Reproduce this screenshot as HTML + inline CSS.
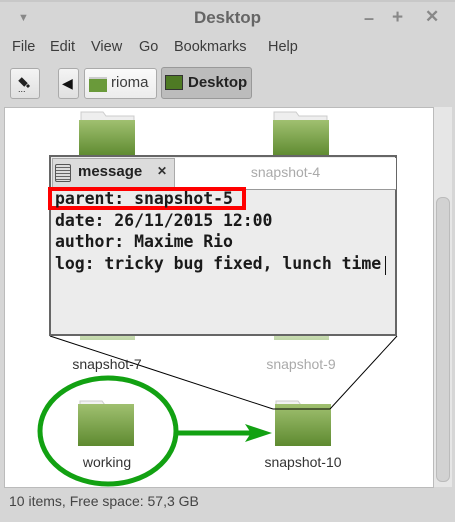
<!DOCTYPE html><html><head><style>
body{margin:0;width:455px;height:522px;background:#d6d6d6;font-family:"Liberation Sans",sans-serif;position:relative;overflow:hidden}
.a{position:absolute}
.t{color:#3c3c3c;font-size:14.5px}
.btn{position:absolute;border:1px solid #aaa;border-radius:3px;background:linear-gradient(#f4f4f4,#e0e0e0);box-sizing:border-box}
.lbl{position:absolute;font-size:14px;color:#333;text-align:center;width:120px}
.mono{font-family:"DejaVu Sans Mono","Liberation Mono",monospace;font-size:16.5px;font-weight:bold;color:#1a1a1a;line-height:21.5px;position:absolute;left:55px;top:188px;white-space:pre;letter-spacing:-0.05px}
</style></head><body>
<div class="a" style="left:0;top:0;width:455px;height:2px;background:#c8c8c8"></div>
<div class="a" style="left:18px;top:12px;color:#888;font-size:11px">▼</div>
<div class="a" style="left:0;width:455px;top:8px;text-align:center;font-size:17px;font-weight:bold;color:#666">Desktop</div>
<div class="a" style="left:364px;top:8px;color:#888;font-size:18px;font-weight:bold">–</div>
<div class="a" style="left:392px;top:7px;color:#888;font-size:19px;font-weight:bold">+</div>
<div class="a" style="left:425px;top:7px;color:#888;font-size:17px;font-weight:bold">✕</div>
<div class="a t" style="left:12px;top:39px">File</div>
<div class="a t" style="left:50px;top:39px">Edit</div>
<div class="a t" style="left:91px;top:39px">View</div>
<div class="a t" style="left:139px;top:39px">Go</div>
<div class="a t" style="left:174px;top:39px">Bookmarks</div>
<div class="a t" style="left:268px;top:39px">Help</div>
<div class="btn" style="left:10px;top:68px;width:30px;height:31px"></div>
<svg class="a" style="left:17px;top:74px" width="18" height="20"><path d="M3 5 L9 11" stroke="#222" stroke-width="5"/><path d="M10 11 L12 13" stroke="#222" stroke-width="3"/><text x="1" y="18" font-size="9" fill="#222">...</text></svg>
<div class="btn" style="left:58px;top:68px;width:21px;height:31px"></div>
<div class="a" style="left:62px;top:75px;font-size:14px;color:#111">◀</div>
<div class="btn" style="left:84px;top:68px;width:73px;height:31px;background:linear-gradient(#fafafa,#ececec)"></div>
<div class="a" style="left:89px;top:77px;width:18px;height:13px;background:#6a9a3a;border-top:2px solid #ccc"></div>
<div class="a t" style="left:111px;top:74px;font-size:15px">rioma</div>
<div class="btn" style="left:161px;top:67px;width:91px;height:32px;background:#bcbcbc;border-color:#999"></div>
<div class="a" style="left:165px;top:75px;width:18px;height:15px;background:#4e7a24;border:1px solid #333;box-sizing:border-box"></div>
<div class="a" style="left:188px;top:74px;font-size:15px;font-weight:bold;color:#222">Desktop</div>
<div class="a" style="left:4px;top:107px;width:428px;height:379px;background:#fff;border:1px solid #bbb"></div>
<div class="a" style="left:434px;top:107px;width:18px;height:380px;background:#e6e6e6"></div>
<div class="a" style="left:436px;top:197px;width:14px;height:285px;background:#d2d2d2;border:1px solid #bbb;border-radius:6px;box-sizing:border-box"></div>
<svg class="a" style="left:0;top:0" width="455" height="522">
<defs><linearGradient id="g" x1="0" y1="0" x2="0" y2="1"><stop offset="0" stop-color="#a0c070"/><stop offset="1" stop-color="#5e8a30"/></linearGradient>
<linearGradient id="h" x1="0" y1="0" x2="0" y2="1"><stop offset="0" stop-color="#d6e6c2"/><stop offset="1" stop-color="#c0d6a8"/></linearGradient></defs>
<path d="M81 112h22l3 4h28v8H81z" fill="#eee" stroke="#ccc"/><rect x="79" y="120" width="56" height="36" fill="url(#g)"/>
<path d="M274 112h22l3 4h28v8H274z" fill="#eee" stroke="#ccc"/><rect x="273" y="120" width="56" height="36" fill="url(#g)"/>
<rect x="80" y="330" width="55" height="10" fill="url(#h)"/><rect x="274" y="330" width="55" height="10" fill="url(#h)"/>
<path d="M80 401h22l3 4h28v8H80z" fill="#f2f2f2" stroke="#ccc"/><rect x="78" y="404" width="56" height="42" fill="url(#g)"/>
<path d="M276 401h22l3 4h28v8H276z" fill="#f2f2f2" stroke="#ccc"/><rect x="275" y="404" width="56" height="42" fill="url(#g)"/>
<line x1="50" y1="336" x2="273" y2="409" stroke="#000" stroke-width="1"/>
<line x1="397" y1="336" x2="330" y2="409" stroke="#000" stroke-width="1"/>
<line x1="273" y1="409" x2="330" y2="409" stroke="#000"/>
<ellipse cx="108" cy="431" rx="68" ry="53" fill="none" stroke="#12a112" stroke-width="5"/>
<line x1="178" y1="433" x2="255" y2="433" stroke="#12a112" stroke-width="5"/>
<path d="M245 424 L272 433 L245 442 L251 433Z" fill="#12a112"/>
</svg>
<div class="lbl" style="left:47px;top:356px">snapshot-7</div>
<div class="lbl" style="left:241px;top:356px;color:#aaa">snapshot-9</div>
<div class="lbl" style="left:47px;top:454px">working</div>
<div class="lbl" style="left:243px;top:454px">snapshot-10</div>
<div class="a" style="left:49px;top:155px;width:348px;height:181px;background:#ececec;border:2px solid #666;box-sizing:border-box"></div>
<div class="a" style="left:175px;top:158px;width:221px;height:31px;background:#fff;border-bottom:1px solid #999"></div>
<div class="a" style="left:52px;top:158px;width:123px;height:31px;background:#dcdcdc;border:1px solid #aaa;border-bottom:none;box-sizing:border-box"></div>
<div class="a" style="left:55px;top:164px;width:16px;height:18px;border:1px solid #555;border-radius:2px;background:repeating-linear-gradient(#ddd 0 2px,#666 2px 3px);box-sizing:border-box"></div>
<div class="a" style="left:78px;top:163px;font-size:15px;font-weight:bold;color:#222">message</div>
<div class="a" style="left:157px;top:164px;font-size:12px;font-weight:bold;color:#333">✕</div>
<div class="a" style="left:175px;top:164px;width:221px;text-align:center;font-size:14px;color:#aaa">snapshot-4</div>
<div class="a" style="left:48px;top:187px;width:198px;height:23px;border:4px solid #f00;box-sizing:border-box"></div>
<div class="mono">parent: snapshot-5
date: 26/11/2015 12:00
author: Maxime Rio
log: tricky bug fixed, lunch time</div>
<div class="a" style="left:385px;top:256px;width:1px;height:19px;background:#111"></div>
<div class="a" style="left:9px;top:493px;font-size:14px;color:#444">10 items, Free space: 57,3 GB</div>
</body></html>
